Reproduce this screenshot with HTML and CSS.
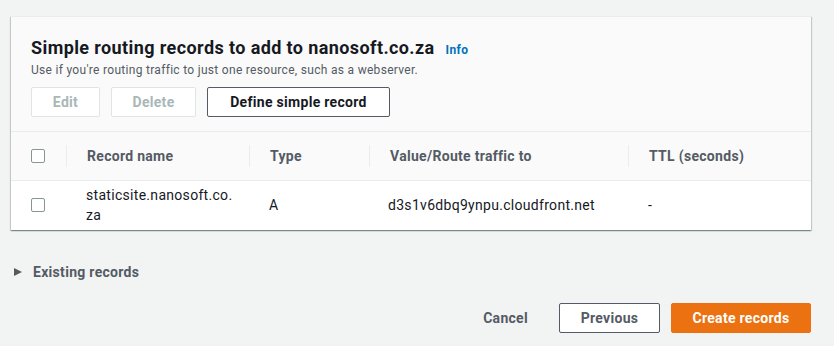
FILE: index.html
```html
<!DOCTYPE html>
<html lang="en">
<head>
    <meta charset="UTF-8">
    <title>Create records</title>
    <link rel="stylesheet" href="styles.css">
</head>
<body>
    <div class="card">
        <div class="card-header">
            <h2>Simple routing records to add to nanosoft.co.za <a class="info" href="#">Info</a></h2>
            <p class="desc">Use if you're routing traffic to just one resource, such as a webserver.</p>
            <div class="actions">
                <button class="btn btn-disabled btn-edit" disabled>Edit</button>
                <button class="btn btn-disabled btn-delete" disabled>Delete</button>
                <button class="btn btn-normal">Define simple record</button>
            </div>
        </div>
        <table class="records">
            <thead>
                <tr>
                    <th class="col-check"><span class="checkbox"></span></th>
                    <th class="col-name"><span class="sep">Record name</span></th>
                    <th class="col-type"><span class="sep">Type</span></th>
                    <th class="col-value"><span class="sep">Value/Route traffic to</span></th>
                    <th class="col-ttl"><span class="sep">TTL (seconds)</span></th>
                </tr>
            </thead>
            <tbody>
                <tr>
                    <td class="col-check"><span class="checkbox"></span></td>
                    <td class="col-name">staticsite.nanosoft.co.<br>za</td>
                    <td class="col-type">A</td>
                    <td class="col-value">d3s1v6dbq9ynpu.cloudfront.net</td>
                    <td class="col-ttl">-</td>
                </tr>
            </tbody>
        </table>
    </div>

    <div class="expander">
        <span class="caret"></span>
        <span>Existing records</span>
    </div>

    <div class="footer">
        <button class="btn btn-link">Cancel</button>
        <button class="btn btn-normal btn-prev">Previous</button>
        <button class="btn btn-primary">Create records</button>
    </div>
</body>
</html>
```

FILE: styles.css
```css
* {
    margin: 0;
    padding: 0;
    box-sizing: border-box;
}

body {
    font-family: Roboto, "Noto Sans", Arial, sans-serif;
    letter-spacing: 0.3px;
    background: #f2f3f3;
    color: #16191f;
    width: 834px;
    height: 346px;
    padding: 16px 23px 0 11px;
    overflow: hidden;
}

.card {
    width: 800px;
    background: #fff;
    border-top: 1px solid #eaeded;
    box-shadow: 0 1px 1px 0 rgba(0, 28, 36, 0.3), 1px 1px 1px 0 rgba(0, 28, 36, 0.15), -1px 1px 1px 0 rgba(0, 28, 36, 0.15);
}

.card-header {
    background: #fafafa;
    padding: 19px 20px 14px 20px;
    border-bottom: 1px solid #eaeded;
}

h2 {
    font-size: 18px;
    font-weight: 700;
    line-height: 24px;
    letter-spacing: 0.4px;
    color: #16191f;
}

.info {
    font-size: 12px;
    font-weight: 700;
    color: #0073bb;
    text-decoration: none;
    margin-left: 6px;
}

.desc {
    font-size: 12px;
    line-height: 16px;
    color: #545b64;
}

.actions {
    display: flex;
    gap: 11px;
    margin-top: 9px;
}

.btn {
    font-family: inherit;
    letter-spacing: inherit;
    font-size: 14px;
    font-weight: 700;
    height: 30px;
    border-radius: 2px;
    background: #fff;
    cursor: pointer;
}

.btn-disabled {
    border: 1px solid #e1e4e4;
    color: #aab7b8;
    cursor: default;
}

.btn-edit { width: 69px; }
.btn-delete { width: 85px; }

.btn-normal {
    border: 1px solid #545b64;
    color: #545b64;
    padding: 0 20px;
}

.actions .btn-normal {
    width: 183px;
    color: #16191f;
}

.records {
    width: 100%;
    border-collapse: collapse;
    font-size: 14px;
}

.records th {
    background: #fafafa;
    color: #545b64;
    font-weight: 700;
    text-align: left;
    height: 48px;
    border-bottom: 1px solid #eaeded;
    padding: 0;
}

.records th .sep {
    display: block;
    border-left: 1px solid #eaeded;
    padding-left: 20px;
    line-height: 22px;
}

.records td {
    height: 50px;
    color: #16191f;
    padding: 0 0 0 20px;
    line-height: 20px;
    vertical-align: middle;
}

.col-check { width: 55px; }
.records th.col-check, .records td.col-check { padding-left: 20px; }
.col-name { width: 183px; }
.col-type { width: 120px; }
.col-value { width: 259px; }

.records td.col-value { padding-left: 19px; }

.checkbox {
    display: block;
    width: 14px;
    height: 14px;
    border: 1px solid #879596;
    border-radius: 2px;
    background: #fff;
}

.expander {
    display: flex;
    align-items: center;
    gap: 11px;
    margin-top: 34px;
    margin-left: 3px;
    font-size: 14px;
    font-weight: 700;
    color: #545b64;
}

.caret {
    width: 0;
    height: 0;
    border-top: 4px solid transparent;
    border-bottom: 4px solid transparent;
    border-left: 8px solid #545b64;
}

.footer {
    display: flex;
    justify-content: flex-end;
    align-items: center;
    gap: 11px;
    width: 800px;
    margin-top: 23px;
}

.btn-link {
    border: none;
    background: none;
    color: #545b64;
    padding: 0 20px;
    margin-right: 0;
}

.btn-prev {
    width: 101px;
    color: #545b64;
}

.btn-primary {
    width: 140px;
    border: 1px solid #ec7211;
    background: #ec7211;
    color: #fff;
}
```
